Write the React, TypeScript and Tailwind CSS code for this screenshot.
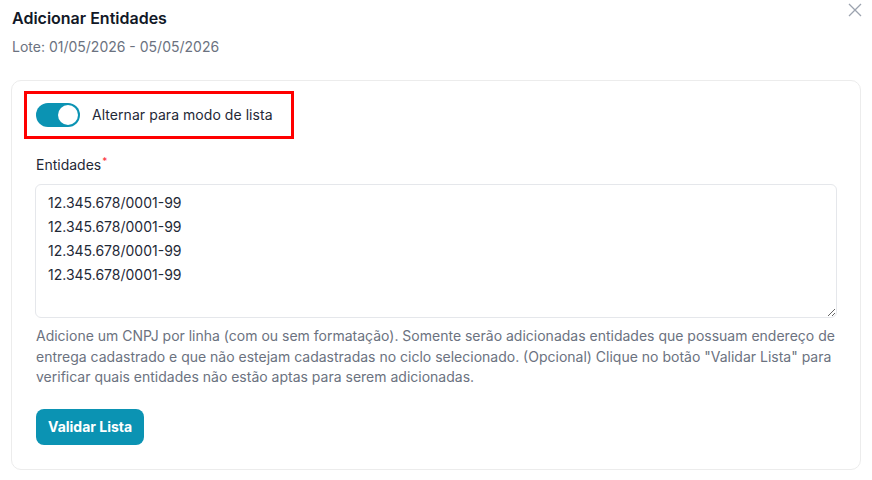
import React, { useState } from 'react';

const cnpjs = ['12.345.678/0001-99', '12.345.678/0001-99', '12.345.678/0001-99', '12.345.678/0001-99'];

// Switch with the thumb pushed right when on
function Toggle({ on, onChange }: { on: boolean; onChange: (v: boolean) => void }) {
  return (
    <button
      type="button"
      onClick={() => onChange(!on)}
      className={`relative h-6 w-11 shrink-0 rounded-full transition-colors ${on ? 'bg-[#0b93b3]' : 'bg-gray-300'}`}
    >
      <span
        className={`absolute top-[2px] h-5 w-5 rounded-full bg-white transition-all ${on ? 'left-[22px]' : 'left-[2px]'}`}
      />
    </button>
  );
}

const App: React.FC = () => {
  const [listMode, setListMode] = useState(true);
  const [value, setValue] = useState(cnpjs.join('\n'));

  return (
    <div className="relative w-[872px] h-[480px] bg-white px-3 pt-[6px] font-['Inter',sans-serif] text-[#111827]">
      <button className="absolute right-[9px] top-[2px] text-[#9ca3af]">
        <svg width="16" height="16" viewBox="0 0 16 16" fill="none" stroke="currentColor" strokeWidth="1.3">
          <path d="M2 2 L14 14 M14 2 L2 14" />
        </svg>
      </button>
      <h2 className="text-base leading-6 font-semibold">Adicionar Entidades</h2>
      <p className="mt-[7px] text-sm leading-5 text-[#6b7280]">Lote: 01/05/2026 - 05/05/2026</p>

      <div className="mt-[23px] -ml-px w-[850px] rounded-[10px] border border-[#ececec] px-6 pt-[10px] pb-6">
        <div className="-mx-3 w-fit border-[3px] border-[#ff0000] py-[9px] pl-[9px] pr-[18px] flex items-center gap-3">
          <Toggle on={listMode} onChange={setListMode} />
          <span className="text-sm leading-5 tracking-[0.05px] text-[#1f2937]">Alternar para modo de lista</span>
        </div>

        <label className="mt-4 block text-sm leading-5 text-[#1f2937]">
          Entidades<sup className="ml-[1px] text-[10px] text-red-500">*</sup>
        </label>
        <textarea
          value={value}
          onChange={(e) => setValue(e.target.value)}
          className="mt-[9px] block h-[134px] w-[802px] -ml-px rounded-md border border-[#e5e7eb] px-3 py-[6px] text-sm leading-6 text-[#1f2937] outline-none"
        />
        <p className="mt-2 text-sm leading-[20.5px] text-[#6b7280]">
          Adicione um CNPJ por linha (com ou sem formatação). Somente serão adicionadas entidades que possuam endereço de entrega cadastrado e que não estejam cadastradas no ciclo selecionado. (Opcional) Clique no botão "Validar Lista" para verificar quais entidades não estão aptas para serem adicionadas.
        </p>
        <button className="mt-[21px] h-9 rounded-lg bg-[#0b93b3] px-3 text-sm font-bold text-white">
          Validar Lista
        </button>
      </div>
    </div>
  );
};

export default App;
